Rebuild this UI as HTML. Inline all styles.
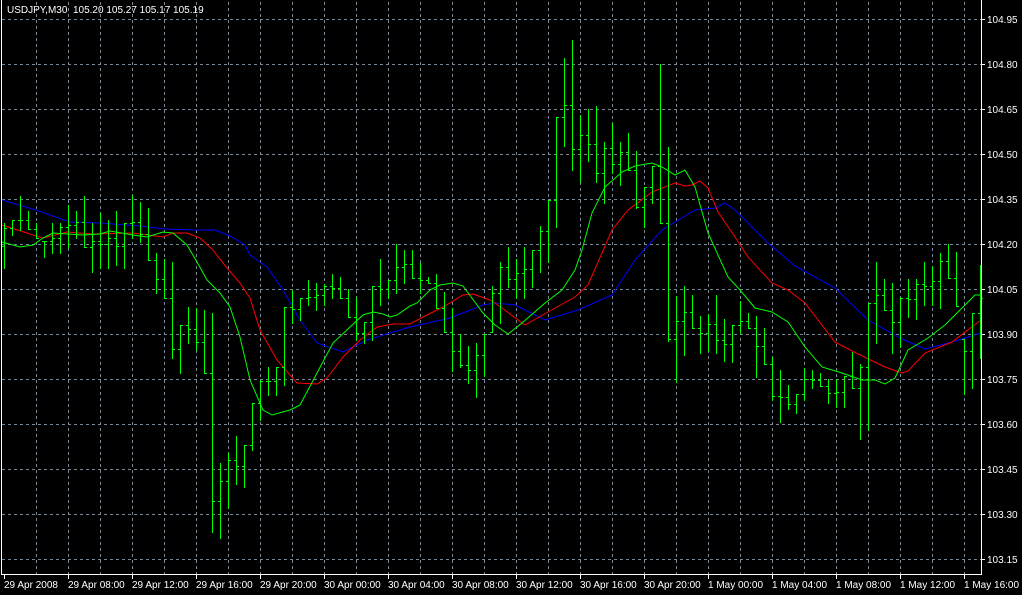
<!DOCTYPE html>
<html><head><meta charset="utf-8"><style>
html,body{margin:0;padding:0;background:#000;width:1022px;height:595px;overflow:hidden}
svg{display:block}
text{font-family:"Liberation Sans",sans-serif;font-size:10px;fill:#fff;white-space:pre}
</style></head><body>
<svg id="s" width="1022" height="595" xmlns="http://www.w3.org/2000/svg">
<rect width="1022" height="595" fill="#000"/>
<g id="grid" stroke="#778899" stroke-width="1" stroke-dasharray="3,3" shape-rendering="crispEdges"></g>
<g id="lines" fill="none" stroke-width="1"></g>
<g id="bars" stroke="#00ff00" stroke-width="1" shape-rendering="crispEdges"></g>
<g stroke="#fff" stroke-width="1" shape-rendering="crispEdges" fill="none">
<line x1="1.5" y1="0" x2="1.5" y2="575"/>
<line x1="981.5" y1="0" x2="981.5" y2="575"/>
<line x1="1" y1="574.5" x2="982" y2="574.5"/>
<g id="ticks"></g>
</g>
<g id="labels"></g>
<text x="7" y="13" xml:space="preserve">USDJPY,M30  105.20 105.27 105.17 105.19</text>
</svg>
<script>
var NS="http://www.w3.org/2000/svg";
function el(p,n,a,t){var e=document.createElementNS(NS,n);for(var k in a)e.setAttribute(k,a[k]);if(t)e.textContent=t;document.getElementById(p).appendChild(e);return e;}
for(var x=36;x<=964;x+=32)el("grid","line",{x1:x+.5,y1:2,x2:x+.5,y2:574});
var prices=["104.95","104.80","104.65","104.50","104.35","104.20","104.05","103.90","103.75","103.60","103.45","103.30","103.15"];
for(var i=0;i<13;i++){var y=19+45*i;el("grid","line",{x1:2,y1:y+.5,x2:981,y2:y+.5});
el("ticks","line",{x1:982,y1:y+.5,x2:985,y2:y+.5});
el("labels","text",{x:987,y:y+4},prices[i]);}
var dl=["29 Apr 2008","29 Apr 08:00","29 Apr 12:00","29 Apr 16:00","29 Apr 20:00","30 Apr 00:00","30 Apr 04:00","30 Apr 08:00","30 Apr 12:00","30 Apr 16:00","30 Apr 20:00","1 May 00:00","1 May 04:00","1 May 08:00","1 May 12:00","1 May 16:00"];
for(var i=0;i<16;i++){var x=4+64*i;el("ticks","line",{x1:x+.5,y1:575,x2:x+.5,y2:579});el("labels","text",{x:x,y:588},dl[i]);}
var B=[[223,268],[220,235],[196,230],[211,229],[223,238],[241,257],[223,253],[223,253],[205,248],[211,238],[196,247],[223,272],[213,268],[220,268],[211,265],[223,268],[195,238],[202,242],[208,260],[253,293],[259,298],[262,358],[325,373],[307,343],[308,350],[310,373],[313,532],[463,538],[453,508],[436,484],[445,487],[403,450],[380,420],[367,395],[367,395],[307,385],[290,323],[298,320],[280,305],[283,310],[284,305],[274,298],[277,298],[289,317],[297,340],[322,343],[286,340],[259,305],[280,298],[244,293],[250,283],[250,278],[263,293],[277,283],[274,308],[292,332],[308,371],[334,367],[346,383],[343,397],[334,376],[286,332],
[262,323],[247,287],[259,298],[247,298],[250,287],[226,272],[200,262],[117,227],[58,146],[40,170],[115,182],[109,161],[106,182],[142,203],[123,173],[142,185],[133,170],[151,208],[187,227],[166,203],[64,223],[147,341],[296,382],[286,355],[295,328],[316,353],[314,351],[295,353],[319,361],[325,362],
[301,333],[313,328],[316,377],[328,364],[357,400],[370,422],[385,409],[394,413],[368,400],[370,388],[373,386],[379,403],[379,407],[376,407],[352,388],[364,439],[303,430],[262,343],[279,310],[283,353],[297,347],[279,317],[279,319],[262,305],[266,305],[253,308],[244,278],[252,306],[339,394],[313,388],[265,358]];
var prev=null;
for(var k=0;k<B.length;k++){var x=4+8*k+.5,h=B[k][0],l=B[k][1];
var o=prev==null?(h+l)/2:Math.min(l,Math.max(h,prev));
var c;if(k+1<B.length){var m=(B[k+1][0]+B[k+1][1])/2;c=Math.min(l,Math.max(h,m));}else c=h+(l-h)*0.35;
c=Math.round(c);o=Math.round(o);
el("bars","line",{x1:x,y1:h,x2:x,y2:l+1});
el("bars","line",{x1:x-2.5,y1:o+.5,x2:x,y2:o+.5});
el("bars","line",{x1:x,y1:c+.5,x2:x+2.5,y2:c+.5});
prev=c;}
function pl(pts,col){el("lines","polyline",{points:pts.map(function(p){return p.join(",")}).join(" "),stroke:col});}
pl([[2,200],[36,210],[70,222],[100,223],[140,226],[165,229],[195,230],[215,230],[230,236],[245,245],[250,255],[267,267],[283,290],[300,320],[317,343],[343,352],[367,340],[410,327],[450,318],[483,305],[495,303],[515,305],[545,320],[578,310],[612,295],[635,260],[662,230],[695,210],[715,208],[725,203],[735,210],[768,243],[795,266],[835,288],[868,320],[902,339],[925,349],[952,342],[981,333]],"#0000ff");
pl([[2,225],[33,235],[43,238],[67,232],[93,234],[133,233],[163,237],[173,233],[187,233],[200,238],[213,250],[227,268],[240,283],[250,298],[260,330],[277,360],[297,383],[317,384],[327,378],[343,357],[360,340],[377,327],[393,324],[410,324],[423,317],[443,307],[463,295],[473,294],[490,300],[495,303],[525,325],[548,312],[575,297],[588,285],[612,230],[628,210],[652,192],[675,183],[685,186],[692,185],[700,181],[708,188],[718,212],[735,237],[748,257],[772,283],[788,290],[805,303],[835,342],[852,351],[885,367],[902,373],[908,371],[925,353],[952,342],[981,320]],"#ff0000");
pl([[2,242],[20,247],[33,245],[43,238],[53,233],[83,235],[100,234],[110,231],[133,235],[147,237],[163,232],[173,233],[187,245],[197,262],[207,280],[220,293],[230,307],[240,337],[250,380],[263,410],[272,415],[290,410],[300,405],[317,373],[333,343],[350,327],[363,315],[373,312],[383,314],[390,317],[397,315],[410,306],[417,303],[430,290],[440,285],[453,283],[463,286],[483,313],[495,325],[508,334],[522,323],[545,303],[562,290],[575,270],[582,250],[592,213],[605,187],[622,172],[635,166],[652,163],[662,167],[675,175],[685,170],[695,187],[708,233],[728,277],[740,290],[755,308],[772,312],[788,322],[805,347],[822,367],[842,373],[862,380],[875,380],[885,384],[895,378],[908,350],[928,338],[945,325],[965,305],[975,295],[981,295]],"#00ff00");
</script>
</body></html>
